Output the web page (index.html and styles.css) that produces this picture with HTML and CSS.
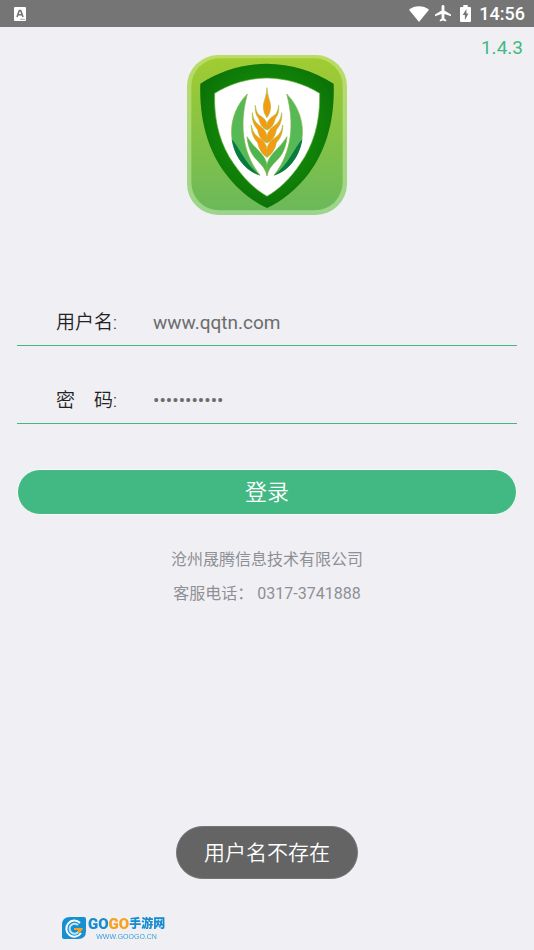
FILE: index.html
```
<!DOCTYPE html>
<html lang="zh-CN">
  <head>
    <meta charset="UTF-8" />
    <meta name="viewport" content="width=device-width, initial-scale=1.0" />
    <title>用户登录</title>
    <link rel="stylesheet" href="styles.css">
  </head>

  <body>
    <!-- Status bar -->
    <header class="status-bar">
      <svg class="app-icon" width="12" height="14" viewBox="0 0 12 14">
        <rect width="12" height="14" rx="1" fill="#fff" />
        <path d="M3 10 L5.3 3.5 H6.7 L9 10 M4 7.8 H8" fill="none" stroke="#757575" stroke-width="1.6" />
        <path d="M6 12.3 H11" stroke="#aaa" stroke-width="1" />
      </svg>
      <div class="status-icons">
        <svg width="20" height="16" viewBox="0 0 20 16">
          <path d="M0 3.8 C5.5 -.8 14.5 -.8 20 3.8 L10 16 Z" fill="#fff" />
        </svg>
        <svg width="16" height="17" viewBox="0 0 16 17">
          <path d="M16 11.2 V9.5 L9.4 5.4 V1.4 C9.4 .6 8.8 0 8 0 S6.6 .6 6.6 1.4 V5.4 L0 9.5 V11.2 L6.6 9.1 V13.6 L4.8 15 V16.4 L8 15.5 L11.2 16.4 V15 L9.4 13.6 V9.1 Z" fill="#fff" />
        </svg>
        <svg class="battery" width="11" height="17" viewBox="0 0 11 17">
          <path d="M3.3 0 H7.7 V2 H10 Q11 2 11 3 V16 Q11 17 10 17 H1 Q0 17 0 16 V3 Q0 2 1 2 H3.3 Z" fill="#fff" />
          <path d="M6.4 4 L2.7 10 H4.9 V15 L8.5 8.6 H6.4 Z" fill="#757575" />
        </svg>
        <span class="clock">14:56</span>
      </div>
    </header>

    <main class="login">
      <span class="version">1.4.3</span>

      <!-- App logo -->
      <svg class="logo" viewBox="21 21 480 480" role="img" aria-label="logo">
        <defs>
          <linearGradient id="tile" x1="0" y1="0" x2="0" y2="1">
            <stop offset="0" stop-color="#a1cc31" />
            <stop offset="1" stop-color="#6bb95a" />
          </linearGradient>
          <linearGradient id="rim" x1="0" y1="0" x2="0" y2="1">
            <stop offset="0" stop-color="#bbdc65" />
            <stop offset="1" stop-color="#9bd58c" />
          </linearGradient>
          <radialGradient id="shield" cx=".5" cy=".45" r=".6">
            <stop offset=".6" stop-color="#118307" />
            <stop offset="1" stop-color="#0a6f08" />
          </radialGradient>
        </defs>
        <rect x="21" y="21" width="480" height="480" rx="94" fill="url(#rim)" />
        <rect x="34" y="31" width="454" height="456" rx="84" fill="url(#tile)" />
        <path d="M261 47 C332 48 401 68 461 107 C465 218 437 310 386 377 C351 423 306 459 261 480 C216 459 171 423 137 377 C86 310 57 218 61 107 C121 68 190 48 261 47 Z" fill="url(#shield)" />
        <path d="M261 90 C316 91 372 106 419 136 C421 220 401 291 361 347 C333 389 298 424 261 445 C224 424 189 389 161 347 C121 291 101 220 104 136 C150 106 206 91 261 90 Z" fill="#fff" stroke="#60ad35" stroke-width="2" />

        <!-- Outer leaves -->
        <g id="leaf">
          <path d="M202 138 C165 175 148 229 157 278 C165 328 199 369 240 382 C198 329 172 249 202 138 Z" fill="#55b955" stroke="#8bb545" stroke-width="2" />
          <path d="M155 273 C181 302 195 348 240 382 C197 370 162 326 155 273 Z" fill="#087b43" />
          <path d="M201 266 C226 306 254 316 261 350 V383 C249 334 209 343 201 266 Z" fill="#4db651" stroke="#8bb545" stroke-width="2" />
        </g>
        <use href="#leaf" transform="matrix(-1 0 0 1 522 0)" />

        <!-- Wheat ear -->
        <g fill="#f79a12" stroke="#a6bf45" stroke-width="2">
          <path d="M261 119 C262 146 272 158 272 178 Q271 197 261 209 Q251 197 250 178 C250 158 260 146 261 119 Z" />
          <g id="kernels">
            <path d="M226 172 C228 192 234 199 243 205 C254 212 260 220 261 230 V246 C248 240 240 230 237 213 C229 203 224 190 226 172 Z" />
            <path d="M217 194 C220 216 228 225 239 233 C252 242 260 252 261 267 V285 C246 278 236 264 233 245 C222 233 215 216 217 194 Z" />
            <path d="M214 231 C217 252 226 262 238 270 C251 278 260 290 261 305 V328 C247 319 237 304 233 284 C221 272 213 255 214 231 Z" />
          </g>
          <use href="#kernels" transform="matrix(-1 0 0 1 522 0)" />
        </g>
      </svg>

      <!-- Login form -->
      <form class="login-form">
        <div class="field">
          <label for="username">用户名:</label>
          <input type="text" id="username" value="www.qqtn.com" />
        </div>
        <div class="field">
          <label for="password">密　码:</label>
          <input type="password" id="password" value="12345678901" />
        </div>
        <button type="button" class="login-button">登录</button>
      </form>

      <footer class="company">
        <p>沧州晟腾信息技术有限公司</p>
        <p>客服电话： 0317-3741888</p>
      </footer>
    </main>

    <!-- Toast message -->
    <div class="toast" role="status">用户名不存在</div>

    <!-- Watermark -->
    <div class="watermark">
      <svg width="24" height="24" viewBox="0 0 24 24">
        <path d="M8 1 H22 Q24 1 24 3 V15 Q24 23 16 23 H2 Q0 23 0 21 V9 Q0 1 8 1 Z" fill="#178fd0" />
        <path d="M18 7 A8 8 0 1 0 19 17" fill="none" stroke="#fff" stroke-width="2" />
        <path d="M16 9 A5 5 0 1 0 17 15" fill="none" stroke="#bfe8f7" stroke-width="2" />
        <path d="M12 12 H21 Q20 16 16 17 V14 H12 Z" fill="#f6a21d" />
      </svg>
      <div class="watermark-text">
        <div class="watermark-name"><span class="go-blue">GO</span><span class="go-orange">GO</span><span class="go-cn">手游网</span></div>
        <div class="watermark-url">WWW.GOOGO.CN</div>
      </div>
    </div>
  </body>
</html>
```
FILE: styles.css
```
* {
  box-sizing: border-box;
}

body {
  margin: 0;
  min-height: 100vh;
  background-color: #efeff4;
  font-family: Roboto, "Noto Sans CJK SC", sans-serif;
  color: #222;
}

/* Status bar */
.status-bar {
  display: flex;
  justify-content: space-between;
  align-items: center;
  height: 27px;
  padding: 0 9px 0 14px;
  background-color: #757575;
}

.status-icons {
  display: flex;
  align-items: center;
  gap: 6px;
}

.battery {
  margin-left: 3px;
}

.clock {
  margin-left: 2px;
  font-size: 18px;
  font-weight: 500;
  line-height: 27px;
  color: #fff;
}

/* Login page */
.login {
  position: relative;
  padding: 28px 17px 0;
}

.version {
  position: absolute;
  top: 9px;
  right: 11px;
  font-size: 19px;
  line-height: 24px;
  color: #42b983;
}

.logo {
  display: block;
  width: 160px;
  height: 160px;
  margin: 0 auto 53px;
}

.field {
  display: flex;
  align-items: center;
  height: 78px;
  padding: 32px 0 0 39px;
  border-bottom: 1px solid #42b983;
}

.field label {
  width: 97px;
  font-size: 19px;
  font-weight: 350;
  line-height: 28px;
}

.field input {
  flex: 1;
  min-width: 0;
  padding: 0;
  border: none;
  outline: none;
  background: transparent;
  font-family: inherit;
  font-size: 19px;
  line-height: 28px;
  color: #6c6c6c;
}

.login-button {
  display: block;
  width: 100%;
  height: 46px;
  margin-top: 45px;
  padding: 0 0 4px;
  border: 1px solid #f8fcfa;
  border-radius: 23px;
  background-color: #42b983;
  font-family: inherit;
  font-size: 22px;
  font-weight: 350;
  color: #fff;
  cursor: pointer;
}

.company {
  margin-top: 28px;
  text-align: center;
  font-size: 16px;
  line-height: 34px;
  color: #8f8f94;
}

.company p {
  margin: 0;
}

/* Toast */
.toast {
  position: fixed;
  bottom: 71px;
  left: 50%;
  transform: translateX(-50%);
  padding: 12px 27px 11px;
  border: 1px solid #757575;
  border-radius: 27px;
  background-color: #646464;
  font-size: 21px;
  font-weight: 350;
  line-height: 28px;
  white-space: nowrap;
  color: #fff;
}

/* Watermark */
.watermark {
  position: fixed;
  bottom: 9px;
  left: 62px;
  display: flex;
  align-items: center;
  gap: 2px;
}

.watermark-name {
  display: flex;
  align-items: center;
  font-size: 15px;
  font-weight: 900;
  line-height: 18px;
}

.go-blue {
  color: #168bd0;
}

.go-orange {
  color: #f6a21d;
}

.go-cn {
  font-size: 12px;
  color: #168bd0;
}

.watermark-url {
  font-family: "Liberation Sans", sans-serif;
  font-size: 7px;
  line-height: 8px;
  text-align: center;
  color: #3a9fd6;
}
```
